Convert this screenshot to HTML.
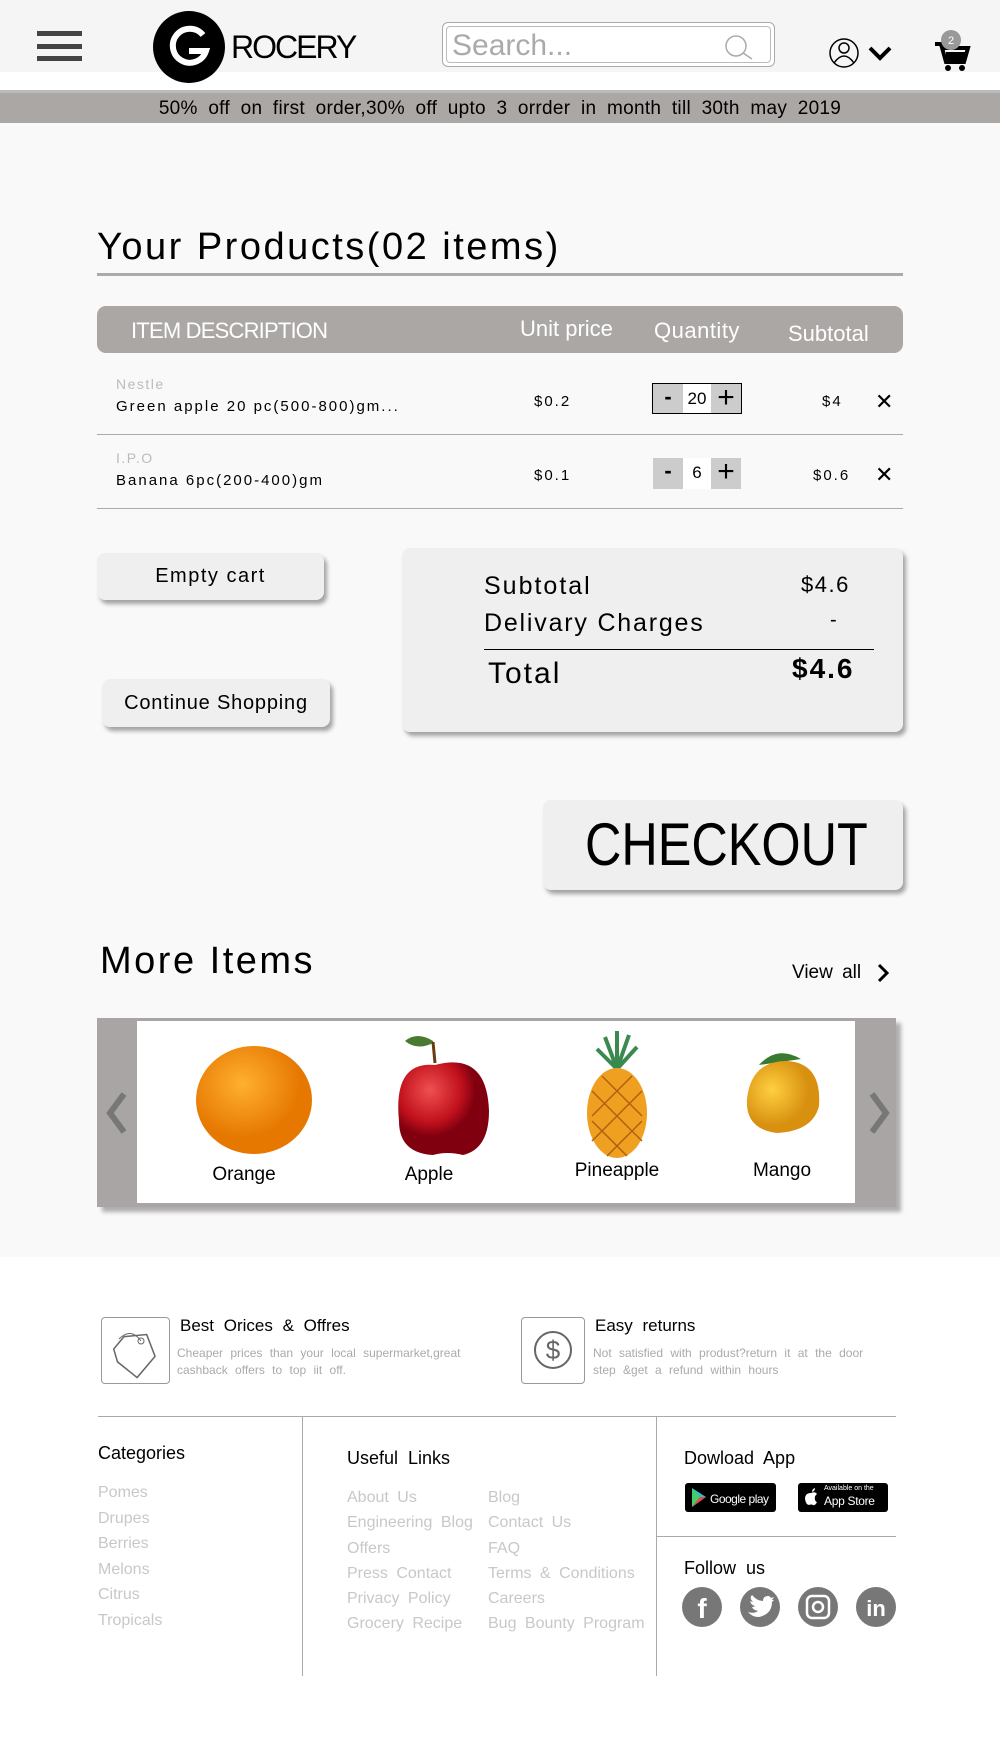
<!DOCTYPE html>
<html><head><meta charset="utf-8">
<style>
*{margin:0;padding:0;box-sizing:border-box}
body{width:1000px;height:1751px;position:relative;background:#f9f9f9;font-family:"Liberation Sans",sans-serif;color:#000;overflow:hidden}
.a{position:absolute;white-space:nowrap}
.n{font-family:"Liberation Sans Narrow","Liberation Sans",sans-serif}
.w{letter-spacing:2px}
.btn{position:absolute;background:#efefef;border-radius:8px;box-shadow:3px 4px 4px rgba(0,0,0,.35);text-align:center}
.qty{position:absolute;width:90px;height:31px;display:flex}
.qty span{display:block;height:100%;text-align:center;font-size:17px;line-height:30px}
</style></head><body>
<!-- header -->
<div class="a" style="left:0;top:0;width:1000px;height:72px;background:#f5f5f5"></div>
<div class="a" style="left:0;top:72px;width:1000px;height:18px;background:#fff"></div>
<div class="a" style="left:37px;top:31px;width:45px;height:5px;background:#444"></div>
<div class="a" style="left:37px;top:44px;width:45px;height:5px;background:#444"></div>
<div class="a" style="left:37px;top:56px;width:45px;height:5px;background:#444"></div>
<div class="a" style="left:153px;top:11px;width:72px;height:72px;border-radius:50%;background:#000"></div>
<svg class="a" style="left:153px;top:11px" width="72" height="72" viewBox="0 0 72 72"><path d="M50 24 A17 17 0 1 0 53 40 H36" fill="none" stroke="#fff" stroke-width="6"/></svg>
<div class="a" style="left:231px;top:29px;font-size:32px;letter-spacing:-2px">ROCERY</div>
<div class="a" style="left:442px;top:22px;width:333px;height:45px;border:1.5px solid #aaa;border-radius:6px;background:#fff"></div>
<div class="a" style="left:446px;top:26px;width:325px;height:37px;border:1.5px solid #bbb;border-radius:4px"></div>
<div class="a" style="left:452px;top:29px;font-size:30px;color:#aaa">Search...</div>
<svg class="a" style="left:720px;top:34px" width="36" height="26"><circle cx="16" cy="12" r="10" fill="none" stroke="#aaa" stroke-width="1.5"/><line x1="23" y1="19" x2="32" y2="25" stroke="#aaa" stroke-width="1.5"/></svg>
<svg class="a" style="left:828px;top:36px" width="70" height="34"><circle cx="16" cy="17" r="14" fill="none" stroke="#000" stroke-width="1.5"/><circle cx="16" cy="12" r="5" fill="none" stroke="#000" stroke-width="1.5"/><path d="M6 27 Q16 13 26 27" fill="none" stroke="#000" stroke-width="1.5"/><path d="M42 12 L52 22 L62 12" fill="none" stroke="#000" stroke-width="4"/></svg>
<svg class="a" style="left:932px;top:28px" width="40" height="46"><path d="M3 16 H9 L14 34 H32 L36 20 H12" fill="none" stroke="#000" stroke-width="4"/><path d="M14 24 H34 V32 H14Z" fill="#000"/><circle cx="16" cy="40" r="3" fill="#000"/><circle cx="30" cy="40" r="3" fill="#000"/><circle cx="19" cy="12" r="10" fill="#999"/><text x="19" y="16" font-size="11" fill="#fff" text-anchor="middle" font-family="Liberation Sans">2</text></svg>
<div class="a" style="left:0;top:90px;width:1000px;height:3px;background:#bbb"></div>
<div class="a" style="left:0;top:93px;width:1000px;height:30px;background:#aba7a5"></div>
<div class="a" style="left:0;top:98px;width:1000px;text-align:center;font-size:19px;word-spacing:5px;letter-spacing:.3px">50% off on first order,30% off upto 3 orrder in month till 30th may 2019</div>

<!-- products -->
<div class="a" style="left:97px;top:226px;font-size:38px;letter-spacing:2.5px">Your Products(02 items)</div>
<div class="a" style="left:97px;top:273px;width:806px;height:3px;background:#aaa"></div>
<div class="a" style="left:97px;top:306px;width:806px;height:47px;background:#aba7a5;border-radius:9px"></div>
<div class="a" style="left:131px;top:318px;font-size:22px;color:#fff;letter-spacing:-.8px">ITEM DESCRIPTION</div>
<div class="a" style="left:520px;top:316px;font-size:22px;color:#fff">Unit price</div>
<div class="a" style="left:654px;top:318px;font-size:22px;color:#fff;letter-spacing:.5px">Quantity</div>
<div class="a" style="left:788px;top:321px;font-size:22px;color:#fff">Subtotal</div>

<div class="a w" style="left:116px;top:376px;font-size:14px;color:#bbb;letter-spacing:1.5px">Nestle</div>
<div class="a w" style="left:116px;top:398px;font-size:15px">Green apple 20 pc(500-800)gm...</div>
<div class="a w" style="left:534px;top:393px;font-size:15px">$0.2</div>
<div class="qty" style="left:652px;top:383px;border:1px solid #000"><span style="width:30px;background:#ccc;font-size:22px;font-weight:bold;line-height:26px">-</span><span style="width:28px;background:#fff">20</span><span style="width:30px;background:#ccc;font-size:30px;line-height:28px">+</span></div>
<div class="a w" style="left:822px;top:393px;font-size:15px">$4</div>
<div class="a" style="left:875px;top:389px;font-size:22px">✕</div>
<div class="a" style="left:97px;top:434px;width:806px;height:1px;background:#aaa"></div>

<div class="a" style="left:116px;top:450px;font-size:14px;color:#bbb;letter-spacing:1.5px">I.P.O</div>
<div class="a w" style="left:116px;top:472px;font-size:15px">Banana 6pc(200-400)gm</div>
<div class="a w" style="left:534px;top:467px;font-size:15px">$0.1</div>
<div class="qty" style="left:653px;top:458px"><span style="width:30px;background:#ccc;font-size:22px;font-weight:bold;line-height:26px">-</span><span style="width:28px;background:#fff">6</span><span style="width:30px;background:#ccc;font-size:30px;line-height:28px">+</span></div>
<div class="a w" style="left:813px;top:467px;font-size:15px">$0.6</div>
<div class="a" style="left:875px;top:462px;font-size:22px">✕</div>
<div class="a" style="left:97px;top:508px;width:806px;height:1px;background:#aaa"></div>

<div class="btn" style="left:97px;top:553px;width:227px;height:47px;font-size:20px;line-height:47px;letter-spacing:1.5px">Empty cart</div>
<div class="btn" style="left:102px;top:679px;width:228px;height:48px;font-size:20px;line-height:48px;letter-spacing:.8px">Continue Shopping</div>

<div class="btn" style="left:402px;top:548px;width:501px;height:184px"></div>
<div class="a" style="left:484px;top:572px;font-size:25px;letter-spacing:2px">Subtotal</div>
<div class="a" style="left:801px;top:572px;font-size:22px;letter-spacing:1.5px">$4.6</div>
<div class="a" style="left:484px;top:609px;font-size:25px;letter-spacing:1.8px">Delivary Charges</div>
<div class="a" style="left:830px;top:609px;font-size:20px">-</div>
<div class="a" style="left:484px;top:649px;width:390px;height:1px;background:#000"></div>
<div class="a" style="left:488px;top:657px;font-size:30px;letter-spacing:2px">Total</div>
<div class="a" style="left:792px;top:653px;font-size:28px;font-weight:bold;letter-spacing:2px">$4.6</div>

<div class="btn" style="left:543px;top:800px;width:360px;height:90px"></div>
<div class="a" style="left:585px;top:810px;font-size:60px;transform:scaleX(.84);transform-origin:0 0">CHECKOUT</div>

<div class="a" style="left:100px;top:940px;font-size:38px;letter-spacing:2.5px">More Items</div>
<div class="a" style="left:792px;top:962px;font-size:19px;word-spacing:4px">View all</div>
<svg class="a" style="left:876px;top:962px" width="14" height="22"><path d="M3 3 L11 11 L3 19" fill="none" stroke="#000" stroke-width="3"/></svg>

<div class="a" style="left:97px;top:1018px;width:799px;height:189px;background:#a8a5a4;box-shadow:5px 5px 4px rgba(0,0,0,.3)"></div>
<div class="a" style="left:137px;top:1021px;width:718px;height:182px;background:#fff"></div>
<svg class="a" style="left:104px;top:1090px" width="26" height="46"><path d="M20 4 L6 23 L20 42" fill="none" stroke="#777" stroke-width="6"/></svg>
<svg class="a" style="left:866px;top:1090px" width="26" height="46"><path d="M6 4 L20 23 L6 42" fill="none" stroke="#777" stroke-width="6"/></svg>
<svg class="a" style="left:137px;top:1021px" width="718" height="182">
<defs><radialGradient id="o" cx=".4" cy=".35"><stop offset="0" stop-color="#ffb030"/><stop offset="1" stop-color="#e67800"/></radialGradient>
<radialGradient id="ap" cx=".35" cy=".3"><stop offset="0" stop-color="#f05050"/><stop offset=".7" stop-color="#c0101c"/><stop offset="1" stop-color="#800010"/></radialGradient>
<radialGradient id="m" cx=".35" cy=".4"><stop offset="0" stop-color="#ffd040"/><stop offset="1" stop-color="#d89010"/></radialGradient></defs>
<ellipse cx="117" cy="79" rx="58" ry="54" fill="url(#o)"/>
<path d="M296 20 Q280 10 268 20 Q280 30 296 22Z" fill="#4a7a30"/><path d="M296 21 L298 42" stroke="#6a3a10" stroke-width="3"/>
<path d="M298 44 Q350 30 352 90 Q352 128 326 134 Q310 130 296 134 Q262 132 262 100 Q256 40 298 44Z" fill="url(#ap)"/>
<path d="M480 48 L468 16 M480 48 L492 14 M480 48 L460 28 M480 48 L500 26 M480 48 L480 10" stroke="#3a8a50" stroke-width="4"/>
<ellipse cx="480" cy="92" rx="30" ry="45" fill="#f0a020"/>
<path d="M455 70 L505 120 M455 100 L490 135 M465 55 L505 95 M505 70 L455 120 M505 100 L470 135 M495 55 L455 95" stroke="#b06010" stroke-width="1.5"/>
<path d="M622 44 Q640 24 664 38 Z" fill="#3a7a30"/>
<path d="M650 40 Q685 42 682 85 Q676 110 640 112 Q608 108 610 78 Q614 40 650 40Z" fill="url(#m)"/>
</svg>
<div class="a" style="left:204px;top:1164px;width:80px;text-align:center;font-size:19px">Orange</div>
<div class="a" style="left:389px;top:1164px;width:80px;text-align:center;font-size:19px">Apple</div>
<div class="a" style="left:567px;top:1160px;width:100px;text-align:center;font-size:19px">Pineapple</div>
<div class="a" style="left:742px;top:1160px;width:80px;text-align:center;font-size:19px">Mango</div>

<!-- footer -->
<div class="a" style="left:0;top:1257px;width:1000px;height:494px;background:#fff"></div>
<div class="a" style="left:101px;top:1317px;width:69px;height:67px;border:1.5px solid #999;border-radius:4px"></div>
<svg class="a" style="left:101px;top:1317px" width="69" height="67"><path d="M20 22 L42 16 L54 36 L40 60 L18 48 L12 36Z" fill="none" stroke="#666" stroke-width="1.5" transform="rotate(10 35 38)"/><circle cx="40" cy="24" r="3" fill="none" stroke="#666"/><path d="M40 24 Q30 10 18 22" fill="none" stroke="#666"/></svg>
<div class="a" style="left:180px;top:1316px;font-size:17px;word-spacing:5px">Best Orices &amp; Offres</div>
<div class="a" style="left:177px;top:1345px;font-size:12px;color:#aaa;word-spacing:4px;line-height:17px">Cheaper prices than your local supermarket,great<br>cashback offers to top iit off.</div>
<div class="a" style="left:521px;top:1317px;width:64px;height:67px;border:1.5px solid #999;border-radius:4px"></div>
<svg class="a" style="left:521px;top:1317px" width="64" height="67"><circle cx="32" cy="33" r="18" fill="none" stroke="#666" stroke-width="2"/><text x="32" y="42" font-size="26" text-anchor="middle" fill="#666" font-family="Liberation Sans">$</text></svg>
<div class="a" style="left:595px;top:1316px;font-size:17px;word-spacing:5px">Easy returns</div>
<div class="a" style="left:593px;top:1345px;font-size:12px;color:#aaa;word-spacing:4px;line-height:17px">Not satisfied with produst?return it at the door<br>step &amp;get a refund within hours</div>

<div class="a" style="left:98px;top:1416px;width:798px;height:1px;background:#aaa"></div>
<div class="a" style="left:302px;top:1416px;width:1px;height:260px;background:#aaa"></div>
<div class="a" style="left:656px;top:1416px;width:1px;height:260px;background:#aaa"></div>
<div class="a" style="left:656px;top:1536px;width:240px;height:1px;background:#aaa"></div>

<div class="a" style="left:98px;top:1443px;font-size:18px">Categories</div>
<div class="a" style="left:98px;top:1480px;font-size:16px;color:#c8c8c8;line-height:25.5px">Pomes<br>Drupes<br>Berries<br>Melons<br>Citrus<br>Tropicals</div>
<div class="a" style="left:347px;top:1448px;font-size:18px;word-spacing:5px">Useful Links</div>
<div class="a" style="left:347px;top:1485px;font-size:16px;color:#c8c8c8;line-height:25.3px;word-spacing:4px">About Us<br>Engineering Blog<br>Offers<br>Press Contact<br>Privacy Policy<br>Grocery Recipe</div>
<div class="a" style="left:488px;top:1485px;font-size:16px;color:#c8c8c8;line-height:25.3px;word-spacing:4px">Blog<br>Contact Us<br>FAQ<br>Terms &amp; Conditions<br>Careers<br>Bug Bounty Program</div>
<div class="a" style="left:684px;top:1448px;font-size:18px;word-spacing:5px">Dowload App</div>
<div class="a" style="left:685px;top:1483px;width:91px;height:29px;background:#000;border-radius:3px"></div>
<svg class="a" style="left:690px;top:1487px" width="18" height="21"><path d="M2 1 L16 10 L2 20Z" fill="#3bc"/><path d="M2 1 L10 10 L2 20Z" fill="#4c6"/><path d="M10 10 L16 10 L2 20Z" fill="#e44"/></svg>
<div class="a" style="left:710px;top:1492px;font-size:12px;color:#fff;letter-spacing:-.5px">Google play</div>
<div class="a" style="left:798px;top:1483px;width:90px;height:29px;background:#000;border-radius:3px"></div>
<svg class="a" style="left:804px;top:1488px" width="14" height="18"><path d="M7 5 Q11 3 13 6 Q10 8 11 12 Q12 14 13 14 Q11 18 9 17 Q7 16 5 17 Q2 17 1 11 Q1 5 7 5Z M8 4 Q8 1 11 0 Q11 3 8 4Z" fill="#fff"/></svg>
<div class="a" style="left:824px;top:1485px;font-size:7px;color:#fff">Available on the</div>
<div class="a" style="left:824px;top:1494px;font-size:12px;color:#fff;letter-spacing:-.3px">App Store</div>
<div class="a" style="left:684px;top:1558px;font-size:18px;word-spacing:5px">Follow us</div>
<svg class="a" style="left:680px;top:1586px" width="220" height="42">
<circle cx="22" cy="21" r="20" fill="#777"/><text x="22" y="32" font-size="28" font-weight="bold" text-anchor="middle" fill="#fff" font-family="Liberation Sans">f</text>
<circle cx="80" cy="21" r="20" fill="#777"/><path d="M68 26 Q74 28 78 25 Q73 24 72 21 Q74 21 75 20 Q71 19 70 15 Q72 16 73 16 Q69 12 72 9 Q77 15 83 15 Q83 10 88 10 Q90 10 91 12 L94 11 L92 14 L94 14 L92 16 Q92 28 79 31 Q72 31 68 26Z" fill="#fff"/>
<circle cx="138" cy="21" r="20" fill="#777"/><rect x="127" y="10" width="22" height="22" rx="5" fill="none" stroke="#fff" stroke-width="2.5"/><circle cx="138" cy="21" r="5" fill="none" stroke="#fff" stroke-width="2.5"/>
<circle cx="196" cy="21" r="20" fill="#777"/><text x="196" y="30" font-size="22" font-weight="bold" text-anchor="middle" fill="#fff" font-family="Liberation Sans">in</text>
</svg>
</body></html>
